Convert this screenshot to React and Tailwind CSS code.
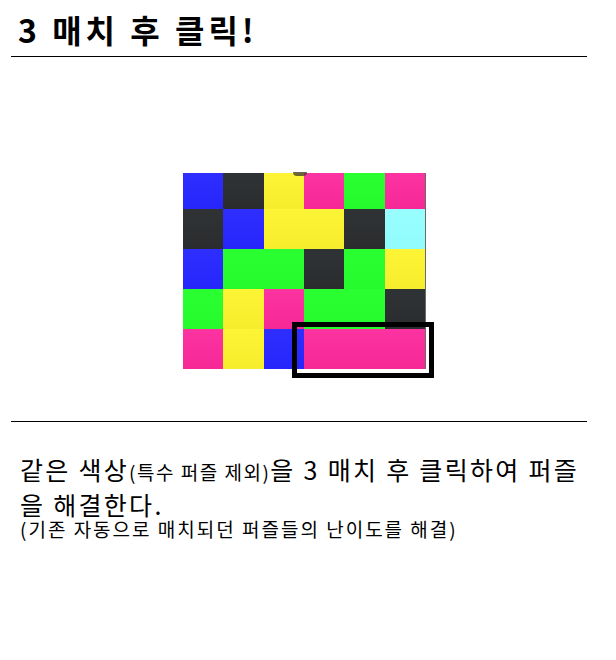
import React from 'react';

const C = {
  b: 'bg-gradient-to-b from-[#2e2eff] to-[#2626fb]',
  d: 'bg-gradient-to-b from-[#303335] to-[#2a2c2e]',
  y: 'bg-gradient-to-b from-[#fdf435] to-[#f6ed2d]',
  p: 'bg-gradient-to-b from-[#fd33a2] to-[#f52896]',
  g: 'bg-gradient-to-b from-[#2aff32] to-[#24fa2c]',
  c: 'bg-gradient-to-b from-[#98fefe] to-[#90fbfb]',
};

const rows = [
  ['b', 'd', 'y', 'p', 'g', 'p'],
  ['d', 'b', 'y', 'y', 'd', 'c'],
  ['b', 'g', 'g', 'd', 'g', 'y'],
  ['g', 'y', 'p', 'g', 'g', 'd'],
  ['p', 'y', 'b', 'p', 'p', 'p'],
];

const font = { fontFamily: '"Noto Sans CJK KR", "Noto Sans", sans-serif' };

export default function App() {
  return (
    <div className="w-[616px] h-[660px] bg-white text-black" style={font}>
      <div className="w-[576px] ml-[11px]">
        {/* Title */}
        <div className="h-[57px] border-b border-black flex items-center pl-[7px] pt-[2px]">
          <h1 className="text-[32px] font-bold tracking-[4px] leading-none">3 매치 후 클릭!</h1>
        </div>

        {/* Puzzle board */}
        <div className="h-[365px] border-b border-black pt-[116px] pl-[172px]">
          <div className="relative w-[242px]">
            <div className="absolute left-[110px] -top-[1px] w-[14px] h-[4px] rounded-b-full bg-[#4a4030] opacity-80" />
            <div className="grid grid-cols-6 grid-rows-[36px_40px_40px_40px_40px] shadow-[1px_0_0_#6a6a6a]">
              {rows.flat().map((k, i) => (
                <div key={i} className={C[k]} />
              ))}
            </div>
            <div className="absolute left-[109px] top-[149px] w-[142px] h-[56px] border-[5px] border-black" />
          </div>
        </div>
      </div>

      {/* Description */}
      <div className="pl-[20px] pt-[31px]">
        <p className="text-[25px] leading-[32px] tracking-[2.3px] whitespace-nowrap">
          같은 색상<span className="text-[19px] tracking-[1.5px]">(특수 퍼즐 제외)</span>을 3 매치 후 클릭하여 퍼즐
          <br />
          을 해결한다.
        </p>
        <p className="text-[19px] leading-[18px] tracking-[2px] whitespace-nowrap">
          (기존 자동으로 매치되던 퍼즐들의 난이도를 해결)
        </p>
      </div>
    </div>
  );
}
